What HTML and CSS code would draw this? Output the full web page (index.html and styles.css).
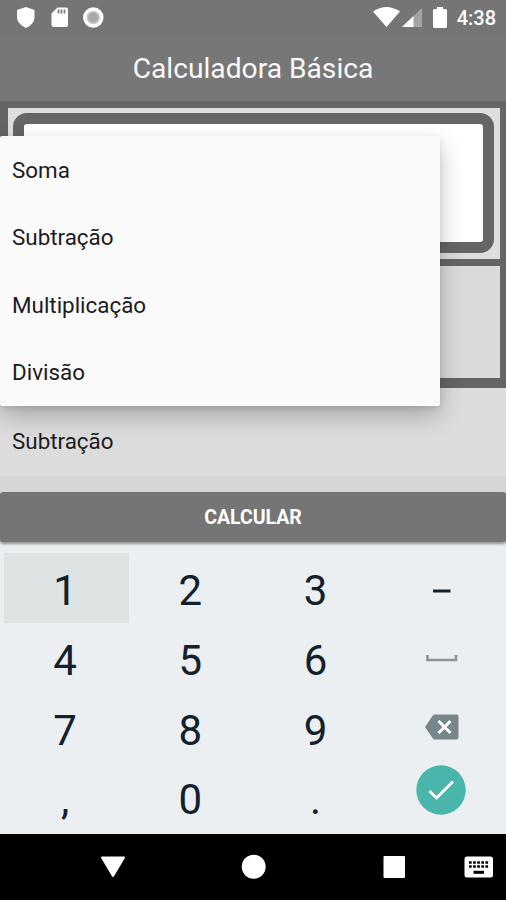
FILE: index.html
```html
<!DOCTYPE html>
<html lang="pt-BR">
<head>
<meta charset="utf-8">
<title>Calculadora Básica</title>
<link rel="stylesheet" href="styles.css">
</head>
<body>
<div class="phone">
  <header class="status">
    <svg class="status-icons" width="110" height="36" viewBox="0 0 110 36">
      <path fill="#fff" d="M17 10 26 7l8.500 3v7c0 5-3.500 8.500-8.500 11-5-2.500-9-6-9-11z"/>
      <path fill="#fff" d="M57.500 7.500H66a2 2 0 0 1 2 2V25a2 2 0 0 1-2 2H53.500a2 2 0 0 1-2-2V13.500z"/>
      <path stroke="#777" stroke-width="1.700" d="M58.500 9.500v4M61.500 9.500v4M64.500 9.500v4"/>
      <circle cx="93.300" cy="17.500" r="8.500" fill="#c9c9c9" stroke="#fff" stroke-width="3.500"/>
      <circle cx="93.300" cy="17.500" r="5" fill="#a9a9a9"/>
    </svg>
    <svg class="status-icons status-right" width="76" height="36" viewBox="372 0 76 36">
      <path fill="#fff" d="M373 11.500Q386.500 2.500 400 11.500L386.500 27z"/>
      <path fill="#a5a5a5" d="M422 8v19h-20z"/><path fill="#fff" d="M413.500 16v11H402z"/>
      <path fill="#fff" d="M437 7h6v2h2.500a1.500 1.500 0 0 1 1.500 1.500v16a1.500 1.500 0 0 1-1.500 1.500h-11a1.500 1.500 0 0 1-1.500-1.500v-16a1.500 1.500 0 0 1 1.500-1.500h2.500z"/>
    </svg>
    <span class="clock">4:38</span>
  </header>
  <h1 class="title">Calculadora Básica</h1>
  <main class="calc">
    <section class="frame">
      <div class="panel panel-field"><div class="field"></div></div>
      <div class="panel"></div>
    </section>
    <div class="spinner">Subtração</div>
    <ul class="menu">
      <li>Soma</li><li>Subtração</li><li>Multiplicação</li><li>Divisão</li>
    </ul>
  </main>
  <button class="submit">CALCULAR</button>
  <section class="keys">
    <span class="key active">1</span><span class="key">2</span><span class="key">3</span>
    <span class="key"><svg width="40" height="40" viewBox="0 0 40 40"><path fill="#12212b" d="M12 18.500h17.500v3H12z"/></svg></span>
    <span class="key">4</span><span class="key">5</span><span class="key">6</span>
    <span class="key"><svg width="40" height="40" viewBox="0 0 40 40"><path fill="none" stroke="#899398" stroke-width="2.500" d="M6.500 14v5h28.500v-5"/></svg></span>
    <span class="key">7</span><span class="key">8</span><span class="key">9</span>
    <span class="key"><svg width="40" height="40" viewBox="0 0 40 40"><path fill="#788589" d="M12.500 4.500H35.500a2 2 0 0 1 2 2v21a2 2 0 0 1-2 2H12.500L4 17z"/><path stroke="#fff" stroke-width="3" d="m17.500 11 12 12m0-12-12 12"/></svg></span>
    <span class="key">,</span><span class="key">0</span><span class="key">.</span>
    <span class="key"><svg class="done" width="50" height="50" viewBox="0 0 50 50"><circle cx="25" cy="25" r="24.700" fill="#4ab5ab"/><path fill="none" stroke="#fff" stroke-width="2.800" d="m13.500 26 7 7 16.500-16.500"/></svg></span>
  </section>
  <nav class="nav">
    <svg width="506" height="66" viewBox="0 834 506 66">
      <path fill="#fff" stroke="#fff" stroke-width="2" stroke-linejoin="round" d="M102 857.500h22L113 876z"/>
      <circle cx="253.700" cy="866.700" r="12" fill="#fff"/>
      <rect x="383.500" y="856" width="21.500" height="22" rx="1" fill="#fff"/>
      <rect x="464.500" y="856.500" width="28.500" height="21" rx="2.500" fill="#fff"/>
      <path stroke="#000" stroke-width="2.700" stroke-dasharray="2.700 1.400" d="M469 862.500h20M469 866.500h20"/>
      <path stroke="#000" stroke-width="3" d="M473.500 872.300h10.500"/>
    </svg>
  </nav>
</div>
</body>
</html>
```
FILE: styles.css
```css
* { box-sizing: border-box; }
body { margin: 0; font-family: Roboto, "Liberation Sans", sans-serif; }
.phone { width: 506px; height: 900px; display: flex; flex-direction: column; overflow: hidden; background: #dcdcdc; }
.status { height: 36px; display: flex; align-items: center; padding-right: 10px; background: #757575; color: #fff; }
.status-icons { display: block; flex: none; }
.status-right { margin-left: auto; margin-right: 9px; }
.clock { font-size: 20px; font-weight: 500; line-height: 36px; }
.title { margin: 0; height: 65px; background: #777; color: #fafafa; font-size: 28.200px; font-weight: 400; line-height: 66px; text-align: center; }
.calc { position: relative; height: 391px; background: #dcdcdc; }
.frame { height: 287px; padding: 7px 6px 10px 8px; display: flex; flex-direction: column; gap: 7px; background: #656565; }
.panel { flex: 1; background: #dadada; }
.panel-field { flex: 0 0 151px; padding: 5px 6px 6px 5px; background: #dedede; }
.field { height: 140px; border: 11px solid #656565; border-radius: 14px; background: #fff; }
.spinner { height: 104px; padding-left: 12px; font-size: 22.400px; line-height: 106px; color: #1c1c1c; background: linear-gradient(#dcdcdc 88px, #d6d6d6 88px); }
.menu { position: absolute; left: 0; top: 34.500px; width: 439.500px; height: 270px; margin: 0; padding: 0; list-style: none; background: #fafafa; border-radius: 2px; box-shadow: 0 10px 24px rgba(0,0,0,.24), 0 2px 6px rgba(0,0,0,.1); }
.menu li { height: 67.500px; padding-left: 12px; font-size: 22.400px; line-height: 69px; color: #1c1c1c; }
.submit { position: relative; height: 50px; flex: none; padding: 2px 0 0; border: 0; border-radius: 3px; background: #757575; color: #fff; font: 700 19.500px/48px Roboto, sans-serif; box-shadow: 0 2px 3px rgba(0,0,0,.4); }
.keys { height: 292px; padding: 11px 2px 2px 3.500px; display: grid; grid-template-columns: repeat(4, 125.200px); grid-template-rows: repeat(4, 69.800px); background: #eceff1; }
.key { display: flex; align-items: center; justify-content: center; padding-top: 6px; padding-right: 2px; font-size: 42px; line-height: 64px; color: #12212b; }
.active { background: #dde2e3; }
.done { margin-top: -20px; }
.nav { height: 66px; background: #000; }
.nav svg { display: block; }
```
